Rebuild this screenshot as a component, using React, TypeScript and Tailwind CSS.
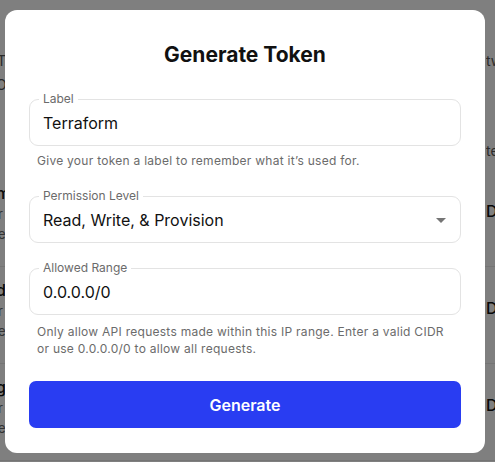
import React from 'react';
import { useState } from 'react';

const rows = [
  { title: 'Terraform', sub: 'Read, Write, & Provision', note: 'Created 2 days ago' },
  { title: 'Build', sub: 'Read only', note: 'Created 3 weeks ago' },
  { title: 'Logging', sub: 'Read & Write', note: 'Created 2 months ago' },
];

const Field = ({ label, value, select }: { label: string; value: string; select?: boolean }) => (
  <div className="relative h-[47px] rounded-[9px] border border-[#e3e3e3] flex items-center pl-[13px] pr-[12px] pt-[1px]">
    <span className="absolute -top-[9px] left-[9px] bg-white px-[4px] text-[12px] leading-[16px] text-[#6b6b6b]">{label}</span>
    <span className="flex-1 text-[16px] leading-[20px] text-[#111]">{value}</span>
    {select && (
      <svg width="10" height="5" viewBox="0 0 10 5" className="mr-[2px]">
        <path d="M0 0 L10 0 L5 5 Z" fill="#757575" />
      </svg>
    )}
  </div>
);

export default function App() {
  const [label] = useState('Terraform');

  return (
    <div className="relative h-[462px] w-[495px] overflow-hidden bg-white font-['Inter',sans-serif]">
      {/* page behind the dialog */}
      <div className="pt-[48px] text-[#555]">
        <div className="flex h-[24px] items-center justify-between text-[14px]">
          <span className="-ml-[3px]">Tw</span>
          <span className="w-[9px] overflow-hidden whitespace-nowrap">two</span>
        </div>
        <div className="flex h-[24px] items-center text-[14px]">
          <span className="-ml-[4px]">O</span>
        </div>
        <div className="mt-[44px] flex h-[20px] items-center justify-end text-[14px]">
          <span className="w-[9px] overflow-hidden whitespace-nowrap">te</span>
        </div>
        <div className="mt-[10px]">
          {rows.map((r) => (
            <div key={r.title} className="flex h-[97px] items-start justify-between border-b border-[#e8e8e8] pt-[12px]">
              <div className="w-[5px] overflow-hidden whitespace-nowrap">
                <div className="-ml-[4px] text-[16px] leading-[22px] font-medium text-[#111]">{r.title.slice(-1)}</div>
                <div className="-ml-[2px] text-[13px] leading-[20px] text-[#666]">r</div>
                <div className="-ml-[2px] text-[13px] leading-[20px] text-[#666]">e</div>
              </div>
              <div className="pt-[18px] w-[9px] overflow-hidden whitespace-nowrap text-[16px] leading-[22px] font-medium text-[#111]">Delete</div>
            </div>
          ))}
        </div>
      </div>

      {/* overlay + dialog */}
      <div className="absolute inset-0 bg-black/50 pl-[5px] pt-[10px]">
        <div className="w-[480px] h-[443px] rounded-[12px] bg-white px-6">
          <h2 className="pt-[31px] text-center text-[21px] leading-[28px] font-bold text-[#111]">Generate Token</h2>

          <div className="mt-[30px]">
            <Field label="Label" value={label} />
            <p className="mt-[6px] px-2 text-[12px] leading-[17px] tracking-[0.27px] text-[#6b6b6b]">
              Give your token a label to remember what it’s used for.
            </p>
          </div>

          <div className="mt-[27px]">
            <Field label="Permission Level" value="Read, Write, & Provision" select />
          </div>

          <div className="mt-[25px]">
            <Field label="Allowed Range" value="0.0.0.0/0" />
            <p className="mt-[8px] px-2 text-[12px] leading-[17px] tracking-[0.27px] text-[#6b6b6b]">
              Only allow API requests made within this IP range. Enter a valid CIDR or use 0.0.0.0/0 to allow all requests.
            </p>
          </div>

          <button className="mt-[24px] h-[47px] w-full rounded-[7px] bg-[#293df2] text-[16px] font-semibold text-white">
            Generate
          </button>
        </div>
      </div>
    </div>
  );
}
